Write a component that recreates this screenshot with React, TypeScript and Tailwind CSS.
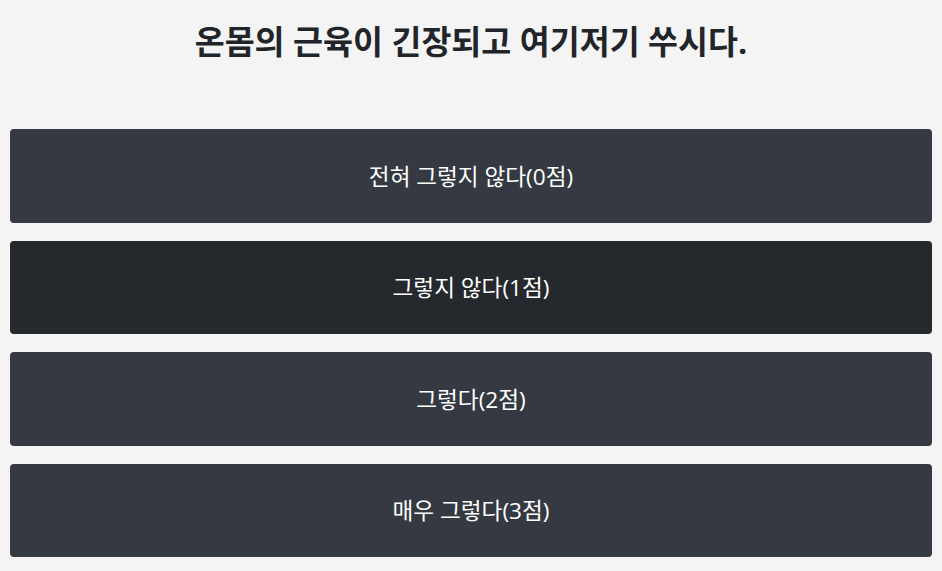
import React from "react";

const options = ["전혀 그렇지 않다(0점)", "그렇지 않다(1점)", "그렇다(2점)", "매우 그렇다(3점)"];

export default function App() {
  return (
    <div
      className="min-h-[571px] w-full bg-[#f4f4f4] px-[10px]"
      style={{ fontFamily: '"Open Sans", "Noto Sans CJK KR", sans-serif' }}
    >
      <h2 className="pt-[21px] text-center text-[32.6px] font-bold leading-[42px] text-[#212529]">
        온몸의 근육이 긴장되고 여기저기 쑤시다.
      </h2>
      <div className="mt-[66px] flex flex-col gap-[18px]">
        {options.map((o, i) => (
          <button
            key={o}
            className={`flex h-[93.5px] w-full items-center justify-center rounded-[4px] pt-[2px] text-[22.6px] text-white ${
              i === 1 ? "bg-[#25282c]" : "bg-[#353a42]"
            }`}
          >
            {o}
          </button>
        ))}
      </div>
    </div>
  );
}
